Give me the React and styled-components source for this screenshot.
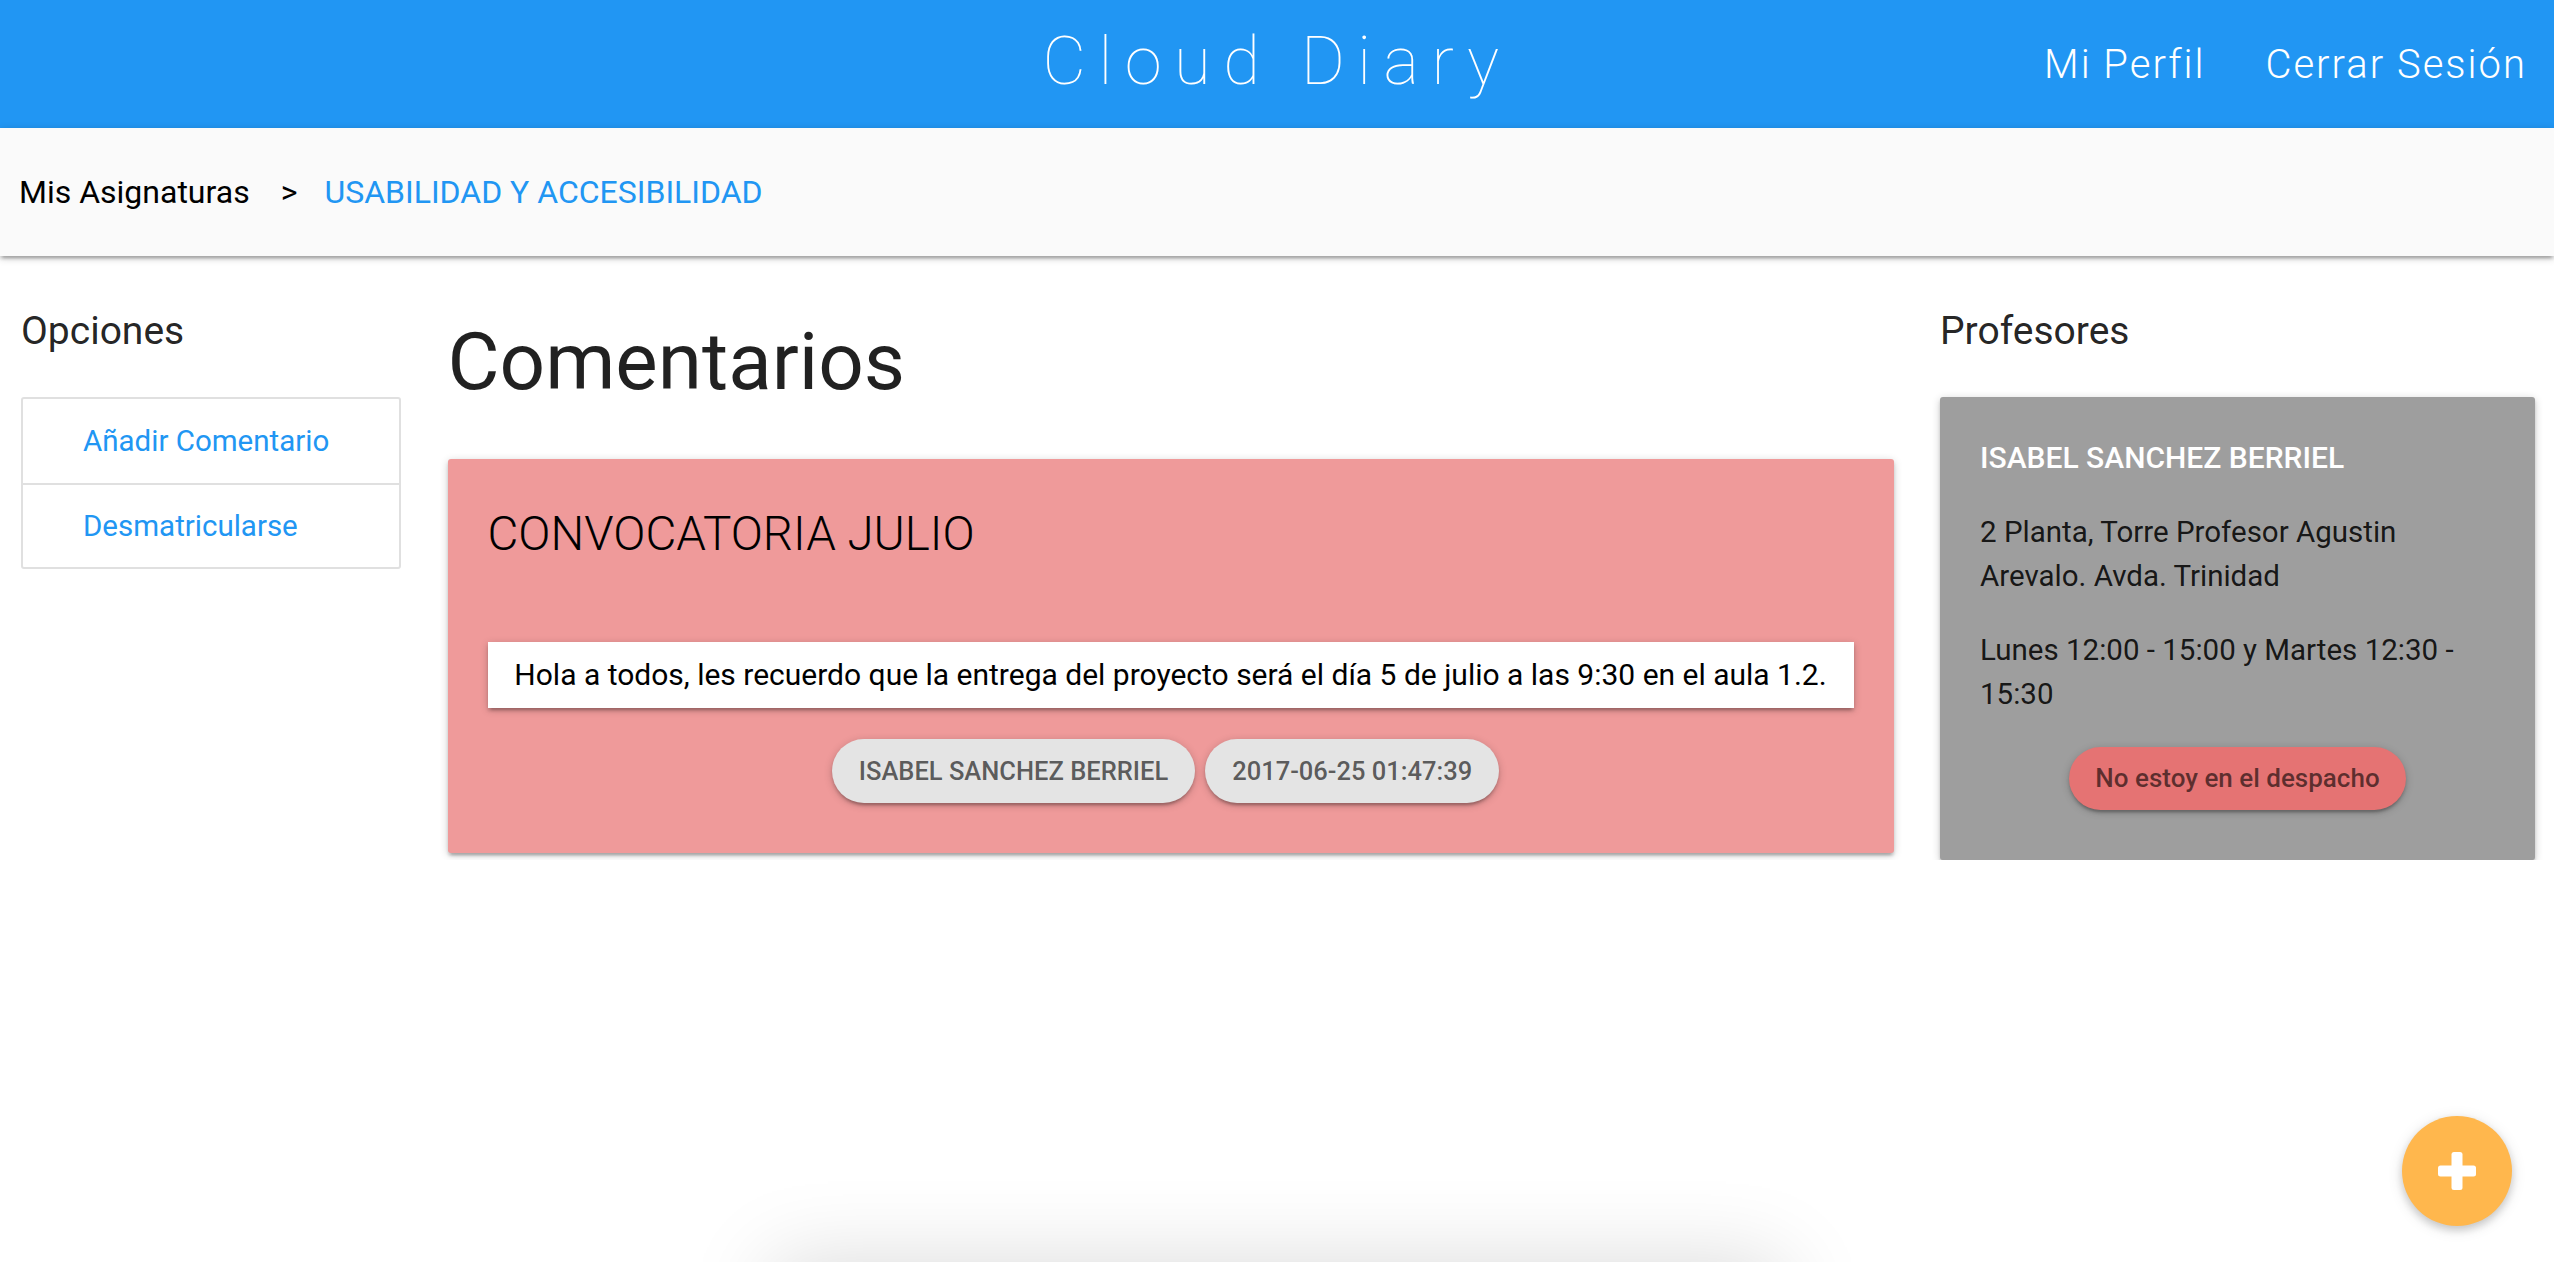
import React from 'react';
import styled, { createGlobalStyle } from 'styled-components';

const Global = createGlobalStyle`
  html, body { margin: 0; padding: 0; background: #fff; }
  body {
    font-family: Roboto, "Noto Sans", "Liberation Sans", sans-serif;
    color: rgba(0, 0, 0, 0.87);
    overflow: hidden;
  }
  * { box-sizing: border-box; }
`;

const shadow1 = '0 3px 3px 0 rgba(0,0,0,0.14), 0 5px 2px -3px rgba(0,0,0,0.12), 0 2px 8px 0 rgba(0,0,0,0.2)';

const Header = styled.header`
  height: 128px;
  background: #2196f3;
  color: #fff;
  display: grid;
  grid-template-columns: 1fr auto 1fr;
  align-items: center;
`;

const Brand = styled.div`
  grid-column: 2;
  font-size: 67px;
  font-weight: 100;
  letter-spacing: 12.5px;
  line-height: 1;
  padding-bottom: 5px;
`;

const Nav = styled.nav`
  grid-column: 3;
  justify-self: end;
  display: flex;
  gap: 60px;
  padding-right: 27px;
`;

const NavLink = styled.a`
  color: #fff;
  text-decoration: none;
  font-size: 40px;
  font-weight: 300;
  letter-spacing: 2px;
`;

const Breadcrumbs = styled.div`
  position: relative;
  z-index: 1;
  height: 128px;
  background: #fafafa;
  box-shadow: ${shadow1};
  display: flex;
  align-items: center;
  padding-left: 19px;
  font-size: 32px;
`;

const Crumb = styled.span`
  color: ${p => (p.$active ? '#2196f3' : '#000')};
`;

const Sep = styled.span`
  color: #000;
  margin: 0 27px 0 31px;
`;

const Layout = styled.main`
  display: grid;
  grid-template-columns: 380px 1446px 595px;
  column-gap: 46.5px;
  padding-left: 21px;
`;

const Column = styled.section``;

const SectionTitle = styled.h4`
  margin: 52px 0 42px;
  font-size: 39px;
  font-weight: 400;
  line-height: 1.2;
`;

const Collection = styled.ul`
  list-style: none;
  margin: 0;
  padding: 0;
  border: 2px solid #e0e0e0;
  border-radius: 3px;
`;

const CollectionItem = styled.li`
  height: 84px;
  display: flex;
  align-items: center;
  padding-left: 60px;
  font-size: 29.5px;
  color: #2196f3;
  & + & { border-top: 2px solid #e0e0e0; }
`;

const PageTitle = styled.h3`
  margin: 62px 0 53px;
  font-size: 80px;
  font-weight: 400;
  line-height: 1.1;
`;

const CommentCard = styled.article`
  background: #ef9a9a;
  border-radius: 3px;
  box-shadow: ${shadow1};
  padding: 39px 40px 50px;
`;

const CardTitle = styled.h5`
  margin: 8px 0 79px;
  font-size: 47.5px;
  font-weight: 300;
  line-height: 1.2;
  color: #000;
`;

const Message = styled.div`
  background: #fff;
  height: 66px;
  line-height: 66px;
  text-align: center;
  font-size: 30px;
  color: #000;
  box-shadow: ${shadow1};
`;

const ChipRow = styled.div`
  display: flex;
  justify-content: center;
  gap: 10px;
  margin-top: 31px;
  padding-right: 10px;
`;

const Chip = styled.span`
  height: 64px;
  line-height: 64px;
  padding: 0 27px;
  border-radius: 32px;
  background: #e4e4e4;
  color: rgba(0, 0, 0, 0.62);
  font-size: 25.5px;
  font-weight: 500;
  box-shadow: ${shadow1};
`;

const ProfCard = styled.article`
  background: #9e9e9e;
  border-radius: 3px;
  box-shadow: ${shadow1};
  padding: 39px 40px 50px;
`;

const ProfName = styled.p`
  margin: 0 0 30px;
  color: #fff;
  font-size: 30px;
  font-weight: 500;
  line-height: 44px;
`;

const ProfText = styled.p`
  margin: 0 0 30px;
  font-size: 29.5px;
  line-height: 44px;
`;

const StatusButton = styled.button`
  display: block;
  margin: 31px auto 0;
  height: 63px;
  padding: 0 26px;
  border: none;
  border-radius: 32px;
  background: #e57373;
  color: rgba(0, 0, 0, 0.6);
  font-family: inherit;
  font-size: 26px;
  font-weight: 500;
  box-shadow: ${shadow1};
`;

const Fab = styled.button`
  position: fixed;
  right: 42px;
  bottom: 36px;
  width: 110px;
  height: 110px;
  border-radius: 50%;
  border: none;
  background: #ffb74d;
  display: flex;
  align-items: center;
  justify-content: center;
  box-shadow: 0 4px 8px 0 rgba(0,0,0,0.16), 0 3px 15px 0 rgba(0,0,0,0.12);
`;

const HiddenModal = styled.div`
  position: fixed;
  top: 100%;
  left: 50%;
  transform: translateX(-50%);
  width: 1010px;
  height: 300px;
  background: #fff;
  box-shadow: 0 0 80px 0 rgba(0,0,0,0.15);
`;

export default function App() {
  return (
    <>
      <Global />
      <Header>
        <Brand>Cloud Diary</Brand>
        <Nav>
          <NavLink href="#">Mi Perfil</NavLink>
          <NavLink href="#">Cerrar Sesión</NavLink>
        </Nav>
      </Header>
      <Breadcrumbs>
        <Crumb>Mis Asignaturas</Crumb>
        <Sep>&gt;</Sep>
        <Crumb $active>USABILIDAD Y ACCESIBILIDAD</Crumb>
      </Breadcrumbs>
      <Layout>
        <Column>
          <SectionTitle>Opciones</SectionTitle>
          <Collection>
            <CollectionItem>Añadir Comentario</CollectionItem>
            <CollectionItem>Desmatricularse</CollectionItem>
          </Collection>
        </Column>
        <Column>
          <PageTitle>Comentarios</PageTitle>
          <CommentCard>
            <CardTitle>CONVOCATORIA JULIO</CardTitle>
            <Message>
              Hola a todos, les recuerdo que la entrega del proyecto será el día 5 de julio a las 9:30 en el aula 1.2.
            </Message>
            <ChipRow>
              <Chip>ISABEL SANCHEZ BERRIEL</Chip>
              <Chip>2017-06-25 01:47:39</Chip>
            </ChipRow>
          </CommentCard>
        </Column>
        <Column>
          <SectionTitle>Profesores</SectionTitle>
          <ProfCard>
            <ProfName>ISABEL SANCHEZ BERRIEL</ProfName>
            <ProfText>2 Planta, Torre Profesor Agustin Arevalo. Avda. Trinidad</ProfText>
            <ProfText>Lunes 12:00 - 15:00 y Martes 12:30 - 15:30</ProfText>
            <StatusButton>No estoy en el despacho</StatusButton>
          </ProfCard>
        </Column>
      </Layout>
      <Fab aria-label="Añadir">
        <svg width="38" height="38" viewBox="0 0 38 38">
          <rect x="13.5" y="0" width="11" height="38" rx="2.5" fill="#fff" />
          <rect x="0" y="13.5" width="38" height="11" rx="2.5" fill="#fff" />
        </svg>
      </Fab>
      <HiddenModal />
    </>
  );
}
